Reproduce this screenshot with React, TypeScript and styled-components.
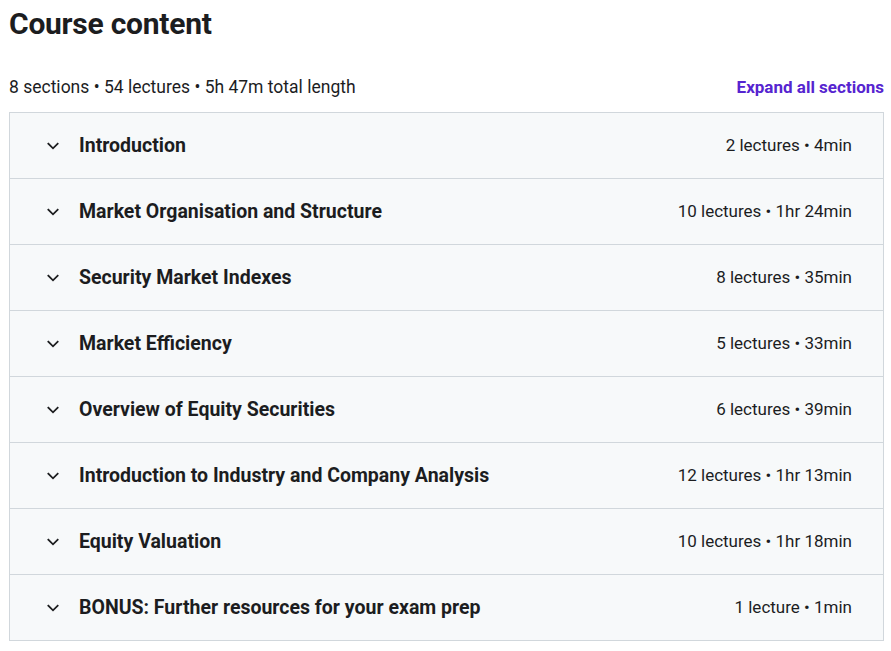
import React from 'react';
import styled, { createGlobalStyle } from 'styled-components';

interface Section {
  title: string;
  lectures: number;
  length: string;
}

const sections: Section[] = [
  { title: 'Introduction', lectures: 2, length: '4min' },
  { title: 'Market Organisation and Structure', lectures: 10, length: '1hr 24min' },
  { title: 'Security Market Indexes', lectures: 8, length: '35min' },
  { title: 'Market Efficiency', lectures: 5, length: '33min' },
  { title: 'Overview of Equity Securities', lectures: 6, length: '39min' },
  { title: 'Introduction to Industry and Company Analysis', lectures: 12, length: '1hr 13min' },
  { title: 'Equity Valuation', lectures: 10, length: '1hr 18min' },
  { title: 'BONUS: Further resources for your exam prep', lectures: 1, length: '1min' },
];

const GlobalStyle = createGlobalStyle`
  body {
    margin: 0;
    background: #fff;
    font-family: Roboto, "Liberation Sans", sans-serif;
    color: #1c1d1f;
  }
`;

const Chevron = () => (
  <svg width="14" height="14" viewBox="0 0 24 24" fill="none">
    <path d="M4 8l8 8 8-8" stroke="#1c1d1f" strokeWidth="3" strokeLinecap="square" />
  </svg>
);

const App: React.FC = () => {
  return (
    <>
      <GlobalStyle />
      <Wrapper>
        <Heading>Course content</Heading>
        <SummaryBar>
          <Summary>8 sections • 54 lectures • 5h 47m total length</Summary>
          <ExpandLink>Expand all sections</ExpandLink>
        </SummaryBar>
        <SectionList>
          {sections.map((s) => (
            <SectionRow key={s.title}>
              <ChevronBox>
                <Chevron />
              </ChevronBox>
              <SectionTitle>{s.title}</SectionTitle>
              <SectionMeta>
                {s.lectures} {s.lectures === 1 ? 'lecture' : 'lectures'} • {s.length}
              </SectionMeta>
            </SectionRow>
          ))}
        </SectionList>
      </Wrapper>
    </>
  );
};

const Wrapper = styled.div`
  padding: 4px 7px 0 9px;
  width: 875px;
`;

const Heading = styled.h2`
  margin: 0;
  font-size: 30px;
  font-weight: 700;
  line-height: 40px;
  letter-spacing: -0.25px;
  color: #1c1d1f;
`;

const SummaryBar = styled.div`
  display: flex;
  align-items: center;
  justify-content: space-between;
  margin-top: 32px;
  height: 22px;
  margin-bottom: 14px;
`;

const Summary = styled.span`
  font-size: 17.5px;
  color: #1c1d1f;
`;

const ExpandLink = styled.button`
  border: none;
  background: none;
  padding: 0;
  font-family: inherit;
  font-size: 17px;
  font-weight: 700;
  color: #5624d0;
  cursor: pointer;
`;

const SectionList = styled.div`
  border: 1px solid #d1d7dc;
  border-bottom: none;
`;

const SectionRow = styled.div`
  display: flex;
  align-items: center;
  height: 65px;
  padding: 0 31px 0 36px;
  background: #f7f9fa;
  border-bottom: 1px solid #d1d7dc;
`;

const ChevronBox = styled.span`
  display: flex;
  width: 33px;
  align-items: center;
`;

const SectionTitle = styled.span`
  flex: 1;
  font-size: 19.5px;
  font-weight: 700;
  color: #1c1d1f;
`;

const SectionMeta = styled.span`
  font-size: 17px;
  line-height: 20px;
  padding-bottom: 1px;
  color: #1c1d1f;
`;

export default App;
